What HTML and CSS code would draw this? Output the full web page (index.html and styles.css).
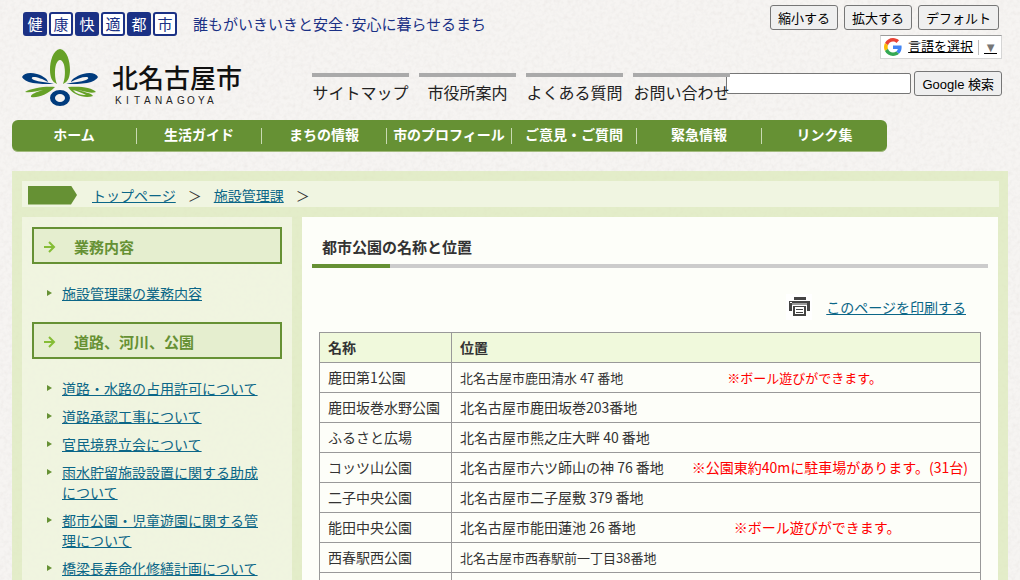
FILE: index.html
```html
<!DOCTYPE html>
<html lang="ja">
<head>
<meta charset="utf-8">
<meta name="viewport" content="width=device-width, initial-scale=1">
<title>都市公園の名称と位置 - 北名古屋市</title>
<link rel="stylesheet" href="styles.css">
</head>
<body>
<header class="header">
  <div class="brand">
    <div class="tagline">
      <span class="badges"><span class="badge filled">健</span><span class="badge">康</span><span class="badge filled">快</span><span class="badge">適</span><span class="badge filled">都</span><span class="badge">市</span></span>
      <span class="slogan">誰もがいきいきと安全·安心に暮らせるまち</span>
    </div>
    <div class="brand-row">
      <a class="logo" href="#" aria-label="北名古屋市">
        <svg width="222" height="60" viewBox="22 48 222 60">
          <path fill="#66a127" fill-rule="evenodd" d="M60 49C53 50 50 61 50 70C50 77 52 82 57 84C54 77 54 61 60 60C66 61 66 77 63 84C68 82 70 77 70 70C70 61 67 50 60 49Z"/>
          <path fill="#003b7d" fill-rule="evenodd" d="M54 84C46 84 39 84 33 83C27 82 23 79 22 77C24 73 30 72 37 74C44 76 48 80 48 82C43 79 37 77 34 77C31 77 31 79 34 80C39 82 46 82 54 84Z"/>
          <path fill="#003b7d" fill-rule="evenodd" d="M66 84C74 84 81 84 87 83C93 82 97 79 98 77C96 73 90 72 83 74C76 76 71 80 71 82C76 79 82 77 86 77C89 77 89 79 86 80C81 82 74 82 66 84Z"/>
          <path fill="#66a127" d="M55 87C46 86 31 88 25 92C31 93 36 91 43 90C37 92 30 94 31 97C38 98 47 95 55 87Z"/>
          <path fill="#66a127" fill-rule="evenodd" d="M68 87C79 86 92 87 96 92C90 94 84 91 78 90C83 92 92 93 93 96C85 99 73 95 68 87ZM73 90C76 94 81 95 86 95C82 93 78 91 73 90Z"/>
          <path fill="#003b7d" fill-rule="evenodd" d="M50 98A10 8 0 1 1 70 98A10 8 0 1 1 50 98ZM55 98A5 4 0 1 0 65 98A5 4 0 1 0 55 98Z"/>
          <text class="logo-name" x="112" y="88">北名古屋市</text>
          <text class="logo-roman" y="104" x="115 126 134 144 155 166 177 187 198 207">KITANAGOYA</text>
        </svg>
      </a>
      <ul class="quick">
        <li><a href="#">サイトマップ</a></li>
        <li><a href="#">市役所案内</a></li>
        <li><a href="#">よくある質問</a></li>
        <li><a href="#">お問い合わせ</a></li>
      </ul>
    </div>
  </div>
  <div class="tools">
    <div class="sizes">
      <button type="button">縮小する</button>
      <button type="button">拡大する</button>
      <button type="button">デフォルト</button>
    </div>
    <div class="translate">
      <svg width="18" height="18" viewBox="0 0 48 48" aria-hidden="true">
        <path fill="#ea4335" d="M24 9.5c3.5 0 6.700 1.200 9.200 3.600l6.900-6.900C35.900 2.400 30.500 0 24 0 14.600 0 6.500 5.400 2.600 13.200l8 6.200C12.400 13.700 17.700 9.500 24 9.500z"/>
        <path fill="#4285f4" d="M47 24.600c0-1.600-.2-3.100-.4-4.600H24v9h12.900c-.6 3-2.200 5.500-4.700 7.200l7.700 6C44.400 38 47 31.800 47 24.600z"/>
        <path fill="#fbbc05" d="M10.500 28.600c-.5-1.500-.8-3-.8-4.600s.3-3.100.8-4.600l-8-6.200C.9 16.500 0 20.100 0 24s.9 7.500 2.600 10.800z"/>
        <path fill="#34a853" d="M24 48c6.500 0 11.900-2.100 15.900-5.800l-7.700-6c-2.200 1.500-4.900 2.300-8.200 2.300-6.300 0-11.600-4.200-13.500-9.900l-8 6.200C6.500 42.600 14.600 48 24 48z"/>
      </svg>
      <a class="language" href="#"><span>言語を選択</span><span class="arrow">▼</span></a>
    </div>
    <form class="search">
      <input type="text" aria-label="サイト内検索">
      <button type="submit">Google 検索</button>
    </form>
  </div>
</header>

<nav class="nav">
  <a href="#">ホーム</a>
  <a href="#">生活ガイド</a>
  <a href="#">まちの情報</a>
  <a href="#">市のプロフィール</a>
  <a href="#">ご意見・ご質問</a>
  <a href="#">緊急情報</a>
  <a href="#">リンク集</a>
</nav>

<div class="wrapper">
  <div class="crumbs">
    <span class="marker"></span>
    <a href="#">トップページ</a><span class="sep">＞</span>
    <a href="#">施設管理課</a><span class="sep">＞</span>
  </div>
  <div class="columns">
    <aside class="side">
      <h2><svg width="12" height="12" viewBox="0 0 12 12" aria-hidden="true"><path d="M0 6H10M5 1L10 6L5 11"/></svg>業務内容</h2>
      <ul>
        <li><a href="#">施設管理課の業務内容</a></li>
      </ul>
      <h2><svg width="12" height="12" viewBox="0 0 12 12" aria-hidden="true"><path d="M0 6H10M5 1L10 6L5 11"/></svg>道路、河川、公園</h2>
      <ul>
        <li><a href="#">道路・水路の占用許可について</a></li>
        <li><a href="#">道路承認工事について</a></li>
        <li><a href="#">官民境界立会について</a></li>
        <li><a href="#">雨水貯留施設設置に関する助成について</a></li>
        <li><a href="#">都市公園・児童遊園に関する管理について</a></li>
        <li><a href="#">橋梁長寿命化修繕計画について</a></li>
      </ul>
    </aside>
    <main class="main">
      <h1>都市公園の名称と位置</h1>
      <div class="print">
        <svg width="26" height="26" viewBox="0 0 26 26" aria-hidden="true">
          <path fill="#fff" d="M0 0H26V26H0Z"/>
          <path fill="#444" d="M8 3H20V6H8ZM3 7H24V17H21V11H6V17H3Z"/>
          <path fill="#999" d="M6 9H21V11H6Z"/>
          <path fill="#fff" d="M4 8H6V9H4Z"/>
          <path fill="#444" fill-rule="evenodd" d="M7 12H20V22H7ZM9 13V20H18V13Z"/>
          <path fill="#444" d="M10 15H17V16H10ZM10 18H17V19H10Z"/>
        </svg>
        <a href="#">このページを印刷する</a>
      </div>
      <table class="parks">
        <thead>
          <tr><th class="name" scope="col">名称</th><th scope="col">位置</th></tr>
        </thead>
        <tbody>
          <tr><td>鹿田第1公園</td><td class="small">北名古屋市鹿田清水 47 番地<span class="note">　　　　　　　　※ボール遊びができます。</span></td></tr>
          <tr><td>鹿田坂巻水野公園</td><td>北名古屋市鹿田坂巻203番地</td></tr>
          <tr><td>ふるさと広場</td><td>北名古屋市熊之庄大畔 40 番地</td></tr>
          <tr><td>コッツ山公園</td><td>北名古屋市六ツ師山の神 76 番地<span class="note">　　※公園東約40mに駐車場があります。(31台)</span></td></tr>
          <tr><td>二子中央公園</td><td>北名古屋市二子屋敷 379 番地</td></tr>
          <tr><td>能田中央公園</td><td>北名古屋市能田蓮池 26 番地<span class="note">　　　　　　　※ボール遊びができます。</span></td></tr>
          <tr><td>西春駅西公園</td><td class="small">北名古屋市西春駅前一丁目38番地</td></tr>
          <tr><td>&nbsp;</td><td>&nbsp;</td></tr>
        </tbody>
      </table>
    </main>
  </div>
</div>
</body>
</html>
```
FILE: styles.css
```css
* {
  box-sizing: border-box;
}

html {
  height: 100%;
  overflow: hidden;
}

body {
  height: 100%;
  margin: 0;
  padding: 0 12px;
  overflow: hidden;
  color: #333;
  font-family: "Noto Sans CJK JP", sans-serif;
  font-size: 14px;
  line-height: 20px;
  background-color: #f6f4f2;
  /* paper grain */
  background-image: url("data:image/svg+xml,%3Csvg xmlns='http://www.w3.org/2000/svg' width='300' height='300'%3E%3Cfilter id='g' x='0' y='0' width='100%25' height='100%25'%3E%3CfeTurbulence type='fractalNoise' baseFrequency='.25' numOctaves='3' stitchTiles='stitch'/%3E%3CfeColorMatrix values='0 0 0 0 .5 0 0 0 0 .46 0 0 0 0 .44 .25 0 0 0 -.1'/%3E%3C/filter%3E%3Crect width='300' height='300' filter='url(%23g)'/%3E%3C/svg%3E");
}

h1, h2, ul {
  margin: 0;
  padding: 0;
}

ul {
  list-style: none;
}

a {
  color: #0b6687;
}

/* header */
.header {
  display: flex;
  justify-content: space-between;
  height: 120px;
  padding-right: 6px;
}

.brand {
  position: relative;
  z-index: 1;
  flex: none;
  padding: 12px 0 0 11px;
}

.tagline {
  display: flex;
  align-items: center;
  gap: 16px;
}

.badges {
  display: flex;
  gap: 2px;
}

.badge {
  width: 24px;
  height: 24px;
  border: 2px solid #1b3185;
  border-radius: 3px;
  background: #fff;
  color: #1b3185;
  font-size: 15px;
  text-align: center;
}

.filled {
  background: #1b3185;
  color: #fff;
}

.slogan {
  color: #1b3185;
  font-size: 15px;
}

.brand-row {
  display: flex;
  align-items: flex-start;
  justify-content: space-between;
  gap: 68px;
  margin-left: -1px;
  padding-top: 12px;
}

.logo svg {
  display: block;
}

.logo-name {
  fill: #111;
  font-size: 26px;
  font-weight: 500;
}

.logo-roman {
  fill: #222;
  font-family: "Liberation Sans", sans-serif;
  font-size: 10px;
}

.quick {
  display: flex;
  gap: 10px;
  padding-top: 25px;
}

.quick li {
  width: 97px;
  padding-top: 5px;
  border-top: 4px solid #aaa;
  text-align: center;
}

.quick a {
  color: #222;
  font-size: 16px;
  text-decoration: none;
  white-space: nowrap;
}

.tools {
  display: flex;
  flex: none;
  flex-direction: column;
  align-items: flex-end;
  margin-left: -5px;
  padding-top: 5px;
}

.tools button {
  height: 25px;
  padding: 0 7px;
  border: 1px solid #767676;
  border-radius: 3px;
  background: #efefef;
  color: #000;
  font-family: "Liberation Sans", "Noto Sans CJK JP", sans-serif;
  font-size: 13px;
}

.sizes {
  display: flex;
  gap: 6px;
  padding-right: 3px;
}

.translate {
  display: flex;
  align-items: center;
  gap: 6px;
  height: 24px;
  margin-top: 5px;
  padding: 0 4px 0 3px;
  border: 1px solid #d5d5d5;
  border-top-color: #9b9b9b;
  background: #fff;
}

.language {
  display: flex;
  align-items: center;
  gap: 5px;
  color: #000;
  font-family: "Liberation Sans", "Noto Sans CJK JP", sans-serif;
  font-size: 13px;
}

.arrow {
  padding-left: 5px;
  border-left: 1px solid #bbb;
  color: #767676;
  line-height: 15px;
  text-decoration: underline #000;
}

.search {
  display: flex;
  align-items: center;
  gap: 3px;
  margin-top: 12px;
}

.search input {
  width: 185px;
  height: 21px;
  border: 1px solid #767676;
  border-radius: 2px;
  background: #fff;
}

/* global navigation */
.nav {
  display: flex;
  align-items: center;
  width: fit-content;
  height: 32px;
  border-bottom: 1px solid #a1ba7d;
  border-radius: 6px;
  background: #669134;
}

.nav a {
  width: 125px;
  padding-bottom: 3px;
  border-right: 1px solid #c9dab3;
  color: #fff;
  font-weight: bold;
  line-height: 13px;
  text-align: center;
  text-decoration: none;
}

.nav a:last-child {
  border-right: 0;
}

/* page body */
.wrapper {
  margin-top: 19px;
  padding: 10px;
  background: rgba(220, 234, 184, 0.7);
}

.crumbs {
  display: flex;
  align-items: center;
  height: 26px;
  margin-right: -1px;
  padding: 2px 6px 0;
  background: #f0f5e1;
}

.marker {
  width: 49px;
  height: 19px;
  margin-right: 15px;
  background: #669134;
  clip-path: polygon(0 0, 43px 0, 100% 50%, 43px 100%, 0 100%);
}

.sep {
  padding: 0 12px;
}

.columns {
  display: flex;
  gap: 10px;
  margin-top: 10px;
}

.side {
  flex: none;
  width: 270px;
  padding: 10px;
  background: rgba(248, 250, 240, 0.6);
}

.side h2 {
  display: flex;
  align-items: center;
  gap: 18px;
  height: 37px;
  padding: 2px 10px 0;
  border: 2px solid #669134;
  background: #e5eecf;
  color: #669134;
  font-size: 15px;
}

.side h2 path {
  fill: none;
  stroke: #85bd36;
  stroke-width: 2;
}

.side ul {
  display: grid;
  gap: 8px;
  padding: 19px 15px;
}

.side li {
  display: flex;
  gap: 10px;
}

.side li::before {
  content: "";
  flex: none;
  width: 5px;
  height: 6px;
  margin-top: 7px;
  background: #669134;
  clip-path: polygon(0 0, 100% 50%, 0 100%);
}

.main {
  flex: 1;
  min-width: 0;
  padding: 20px 10px;
  background: rgba(255, 255, 253, 0.93);
}

.main h1 {
  padding: 0 10px;
  font-size: 15px;
}

.main h1::after {
  content: "";
  display: block;
  height: 4px;
  margin: 7px -10px 0;
  background: linear-gradient(90deg, #669134 78px, #ccc 78px);
}

.print {
  display: flex;
  align-items: center;
  justify-content: flex-end;
  gap: 14px;
  padding: 26px 22px 12px;
}

.parks {
  width: calc(100% - 14px);
  margin: 0 7px;
  border-collapse: collapse;
}

.parks th,
.parks td {
  padding: 5px 8px;
  border: 1px solid #999;
  line-height: 19px;
  text-align: left;
  white-space: nowrap;
}

.parks th {
  background: #f0f9dc;
}

.parks .name {
  width: 132px;
}

.parks .small {
  font-size: 13px;
}

.note {
  color: #f00;
}
```
